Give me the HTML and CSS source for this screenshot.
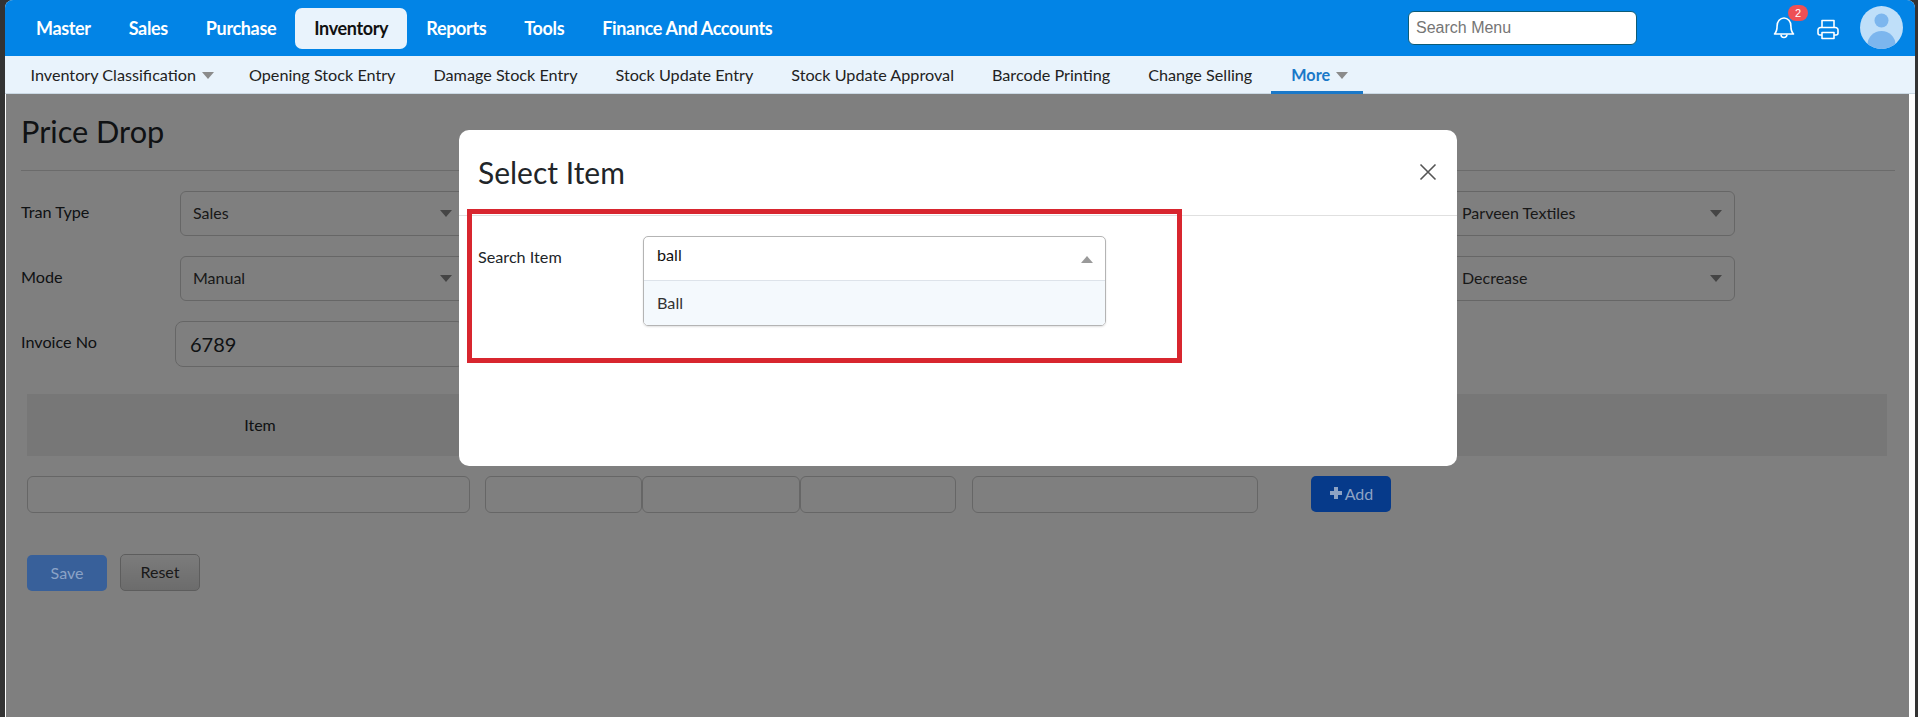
FILE: index.html
```html
<!DOCTYPE html>
<html lang="en">
<head>
<meta charset="utf-8">
<title>Price Drop</title>
<link rel="stylesheet" href="styles.css">
</head>
<body>
<div class="window">
  <header class="topbar">
    <nav class="mainnav">
      <a class="mainlink">Master</a>
      <a class="mainlink">Sales</a>
      <a class="mainlink">Purchase</a>
      <a class="mainlink active">Inventory</a>
      <a class="mainlink">Reports</a>
      <a class="mainlink">Tools</a>
      <a class="mainlink">Finance And Accounts</a>
    </nav>
    <input class="menusearch" type="text" placeholder="Search Menu">
    <div class="bell">
      <svg width="22" height="25" viewBox="0 0 22 25" fill="none" stroke="#fff" stroke-width="1.6" stroke-linejoin="round"><path d="M1.5 20c2-2 2.6-4 2.6-8 0-4.500 3-8 6.900-8s6.900 3.500 6.900 8c0 4 .6 6 2.600 8z"/><path d="M8 20.500a3 3 0 0 0 6 0"/></svg>
      <span class="badge">2</span>
    </div>
    <svg class="printer" width="22" height="21" viewBox="0 0 22 21" fill="none" stroke="#fff" stroke-width="1.600" stroke-linejoin="round"><path d="M5 9V1.500h12V9"/><path d="M5 16H3a2 2 0 0 1-2-2v-3a2.500 2.500 0 0 1 2.500-2.500h15A2.500 2.500 0 0 1 21 11v3a2 2 0 0 1-2 2h-2"/><path d="M5 13.500h12v6H5z"/></svg>
    <svg class="avatar" width="43" height="43" viewBox="0 0 43 43"><defs><clipPath id="avatarclip"><circle cx="21.500" cy="21.500" r="21.500"/></clipPath></defs><circle cx="21.500" cy="21.500" r="21.500" fill="#bfdff9"/><g clip-path="url(#avatarclip)" fill="#7cb6ee"><circle cx="21.500" cy="14.500" r="7"/><ellipse cx="21.500" cy="39" rx="14" ry="14"/></g></svg>
  </header>

  <nav class="subnav">
    <a class="sublink">Inventory Classification<i class="caret"></i></a>
    <a class="sublink">Opening Stock Entry</a>
    <a class="sublink">Damage Stock Entry</a>
    <a class="sublink">Stock Update Entry</a>
    <a class="sublink">Stock Update Approval</a>
    <a class="sublink">Barcode Printing</a>
    <a class="sublink">Change Selling</a>
    <a class="sublink current">More<i class="caret"></i></a>
  </nav>

  <div class="body">
    <main class="content">
      <h1 class="pagetitle">Price Drop</h1>
      <div class="formrow">
        <div class="field"><label class="fieldlabel">Tran Type</label><div class="select">Sales<i class="caret"></i></div></div>
        <div class="select side">Parveen Textiles<i class="caret"></i></div>
      </div>
      <div class="formrow">
        <div class="field"><label class="fieldlabel">Mode</label><div class="select">Manual<i class="caret"></i></div></div>
        <div class="select side">Decrease<i class="caret"></i></div>
      </div>
      <div class="formrow">
        <div class="field invoice"><label class="fieldlabel">Invoice No</label><div class="textbox">6789</div></div>
      </div>

      <div class="tablehead"><div class="headcell">Item</div></div>
      <div class="tablerow">
        <div class="cellinput item"></div>
        <div class="cellinput"></div>
        <div class="cellinput"></div>
        <div class="cellinput"></div>
        <div class="cellinput wide"></div>
        <button class="btn add"><svg width="14" height="14" viewBox="0 0 14 14" fill="currentColor"><path d="M5 1h4v4h4v4H9v4H5V9H1V5h4z"/></svg>Add</button>
      </div>
      <div class="actions">
        <button class="btn save">Save</button>
        <button class="btn reset">Reset</button>
      </div>

      <div class="backdrop">
        <section class="modal">
          <div class="modalhead">
            <h2 class="modaltitle">Select Item</h2>
            <svg class="close" width="18" height="18" viewBox="0 0 18 18" stroke="#555" stroke-width="1.600"><path d="M1.500 1.500l15 15M16.500 1.500l-15 15"/></svg>
          </div>
          <div class="modalbody">
            <label class="searchlabel">Search Item</label>
            <div class="combo">
              <div class="comboinput">ball<i class="caret up"></i></div>
              <div class="combooption">Ball</div>
            </div>
          </div>
          <div class="annotation"></div>
        </section>
      </div>
    </main>
    <div class="scrollstrip"></div>
  </div>
</div>
</body>
</html>
```

FILE: styles.css
```css
* { box-sizing: border-box; }
html, body { height: 100%; }
body {
  margin: 0;
  padding: 0 3px 0 5px;
  background: #333;
  overflow: hidden;
  font-family: Lato, "Liberation Sans", sans-serif;
  color: #212529;
}
.window {
  height: 717px;
  display: flex;
  flex-direction: column;
  background: #fff;
  border-radius: 8px 8px 0 0;
  overflow: hidden;
}
.topbar {
  height: 56px;
  flex: none;
  display: flex;
  align-items: center;
  background: #0284e6;
  padding-left: 12px;
}
.mainnav { display: flex; align-items: center; width: 1391px; }
.mainlink {
  height: 41px;
  padding: 0 19px 1px;
  display: flex;
  align-items: center;
  border-radius: 7px;
  color: #fff;
  font-size: 18px;
  font-weight: 700;
  letter-spacing: -0.35px;
}
.mainlink.active { background: #e9f3fc; color: #111; }
.menusearch {
  width: 229px;
  height: 34px;
  margin-top: -1px;
  padding: 0 7px;
  border: 1px solid #0c5c78;
  border-radius: 6px;
  background: #fff;
  font: 16px "Liberation Sans", sans-serif;
}
.menusearch::placeholder { color: #757575; opacity: 1; }
.bell { position: relative; width: 22px; height: 25px; margin: -3px 0 0 136px; }
.bell svg { display: block; }
.badge {
  position: absolute;
  left: 15px;
  top: -9px;
  width: 20px;
  height: 16px;
  border-radius: 8px;
  background: #ee5055;
  color: #fff;
  font: 11px/16px "Liberation Sans", sans-serif;
  text-align: center;
}
.printer { margin: 3px 0 0 22px; }
.avatar { margin: -2px 0 0 21px; }

.subnav {
  height: 38px;
  flex: none;
  display: flex;
  background: #e9f3fc;
  border-bottom: 1px solid #cbd9e4;
  padding-left: 6.500px;
}
.sublink {
  height: 38px;
  padding: 0 19px 2px;
  display: flex;
  align-items: center;
  gap: 6px;
  font-size: 16.200px;
  color: #222;
  white-space: pre;
}
.sublink.current {
  color: #1a78c8;
  font-weight: 700;
  border-bottom: 3px solid #1a78c8;
  padding: 2px 18px 0 20px;
}
.caret {
  display: inline-block;
  width: 0;
  height: 0;
  border-left: 6px solid transparent;
  border-right: 6px solid transparent;
  border-top: 7px solid #8b8b8b;
  margin-top: 2px;
}
.sublink .caret { margin-right: -3px; }

.body { flex: 1; display: flex; min-height: 0; }
.content {
  flex: 1;
  position: relative;
  margin-left: 1px;
  padding: 16px 174px 0 15px;
  background: #fff;
  overflow: hidden;
}
.scrollstrip { width: 6px; flex: none; background: #fff; }
.pagetitle {
  margin: 0 -160px 0 0;
  height: 61px;
  font-size: 30.700px;
  font-weight: 400;
  line-height: 44px;
  border-bottom: 1px solid #d6d6d6;
}
.formrow {
  height: 45px;
  margin-top: 20px;
  display: flex;
  justify-content: space-between;
}
.field { display: flex; width: 444px; }
.fieldlabel { width: 159px; flex: none; font-size: 16.200px; line-height: 41px; }
.select {
  flex: 1;
  height: 45px;
  padding: 0 12px 2px;
  display: flex;
  align-items: center;
  justify-content: space-between;
  border: 1px solid #ccc;
  border-radius: 6px;
  font-size: 16px;
  line-height: 1;
  color: #333;
}
.select.side { flex: none; width: 286px; }
.textbox {
  flex: 1;
  height: 46px;
  margin-left: -5px;
  padding: 0 14px;
  display: flex;
  align-items: center;
  border: 1px solid #ccc;
  border-radius: 8px;
  font-size: 20px;
}
.tablehead {
  height: 62px;
  margin: 28px -152px 0 6px;
  background: #eee;
}
.headcell {
  width: 466px;
  text-align: center;
  font-size: 16px;
  line-height: 62px;
}
.tablerow {
  margin: 20px 0 0 6px;
  display: grid;
  grid-template-columns: 458px 157px 158px 172px 339px 80px;
  height: 37px;
}
.cellinput { border: 1px solid #ccc; border-radius: 6px; height: 37px; }
.cellinput.item { margin-right: 15px; }
.cellinput:nth-child(4) { margin-right: 16px; }
.cellinput.wide { margin-right: 53px; }
.btn {
  border: 0;
  border-radius: 5px;
  font-family: inherit;
  font-size: 16px;
  padding: 0 0 2px;
}
.add {
  position: relative;
  z-index: 1;
  width: 80px;
  height: 36px;
  display: flex;
  align-items: center;
  justify-content: center;
  gap: 2px;
  background: #063a8a;
  color: #8ea3c4;
}
.actions { margin: 41px 0 0 6px; display: flex; gap: 13px; align-items: flex-end; }
.save {
  position: relative;
  z-index: 1;
  width: 80px;
  height: 36px;
  background: #38609a;
  color: #8ba3c6;
}
.reset {
  width: 80px;
  height: 37px;
  border: 1px solid #bbb;
  background: linear-gradient(#f8f8f8, #d8d8d8);
  color: #333;
}

.backdrop {
  position: absolute;
  inset: 0;
  padding: 36px 0 0 453px;
  background: rgba(0, 0, 0, 0.5);
}
.modal {
  position: relative;
  width: 998px;
  height: 336px;
  background: #fff;
  border-radius: 10px;
}
.modalhead {
  height: 86px;
  display: flex;
  align-items: center;
  justify-content: space-between;
  padding: 0 20px 2px 19px;
  border-bottom: 1px solid #e0e0e0;
}
.modaltitle { margin: 0; font-size: 30px; font-weight: 400; line-height: 1.2; }
.modalbody { display: flex; padding: 20px 0 0 19px; }
.searchlabel { width: 165px; flex: none; font-size: 16.200px; line-height: 42px; }
.combo {
  width: 463px;
  height: 90px;
  border: 1px solid #b4b4b4;
  border-radius: 5px;
  overflow: hidden;
  box-shadow: 0 1px 2px rgba(0, 0, 0, 0.12);
}
.comboinput {
  height: 44px;
  padding: 0 12px 8px 13px;
  display: flex;
  align-items: center;
  justify-content: space-between;
  border-bottom: 1px solid #dde3ea;
  font-size: 16.200px;
  color: #111;
}
.combooption {
  height: 44px;
  padding: 0 13px 2px;
  display: flex;
  align-items: center;
  background: #f4f9fd;
  font-size: 16.200px;
  color: #333;
}
.caret.up {
  border-top: 0;
  border-bottom: 7px solid #9a9a9a;
  margin-top: 10px;
}
.annotation {
  position: absolute;
  left: 8px;
  top: 79px;
  width: 715px;
  height: 154px;
  border: 5px solid #d8262f;
}
```
